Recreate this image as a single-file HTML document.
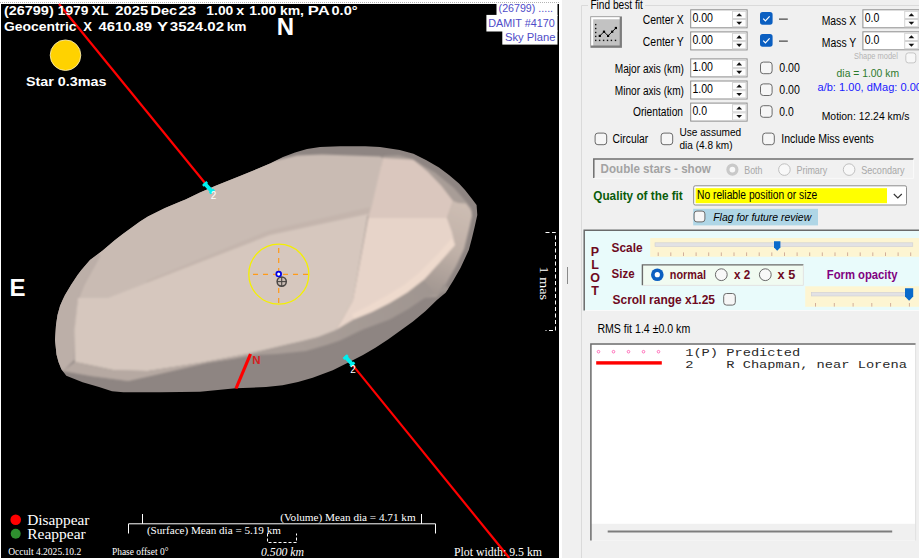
<!DOCTYPE html>
<html>
<head>
<meta charset="utf-8">
<title>Occult asteroid fit</title>
<style>
html,body{margin:0;padding:0;}
body{width:919px;height:558px;overflow:hidden;background:#f0f0f0;position:relative;font-family:"Liberation Sans",sans-serif;font-size:11px;color:#000;}
#plot{position:absolute;left:0;top:0;width:561.5px;height:558px;background:#fff;}
#plot svg{position:absolute;left:0;top:0;}
.sb{font-family:"Liberation Sans",sans-serif;font-weight:bold;fill:#fff;}
.sf{font-family:"Liberation Serif",serif;fill:#fff;}
#right{position:absolute;left:561.5px;top:0;width:358px;height:558px;background:#f0f0f0;overflow:hidden;}
.a{position:absolute;white-space:nowrap;line-height:1;}
</style>
</head>
<body>
<div id="plot">
<svg width="562" height="558" viewBox="0 0 562 558">
<rect x="0" y="0" width="561.5" height="558" fill="#fff"/>
<line x1="0" y1="2.5" x2="559" y2="2.5" stroke="#b4b4b4" stroke-width="1" stroke-dasharray="1,1"/>
<rect x="1" y="4" width="558" height="554" fill="#000"/>
<!-- ASTEROID -->
<g id="ast">
<defs>
<clipPath id="oc"><polygon points="55,340 56,325 57.5,315 60,306 62.6,300 65,295 71,285 77.6,275 81.4,270 90,260 102.7,250.5 115,240 122.8,234 140,221.5 147.9,216.5 165,208 180.5,201.5 185.5,199.5 200,192.5 215.6,185.8 240,176 260,167.8 270,163.5 283,157 295,152.6 307,149 320,147 340,146.3 365.3,146.3 380,147 399.7,149.9 413.5,153.8 426,160 439,167.6 449,175 459,183.4 465,190 470.7,197.2 476.6,205 477.3,215 474.7,226.8 472,238 468.8,250 460.6,267.7 453,281 445.6,292.8 436.9,300 425.6,311 413,321.5 400.5,330.5 388,339.5 375.4,347.7 363,355 350.3,361.5 332.8,370.2 312.7,377.8 298,382 282.6,385.3 266,387 250,387.8 235.6,388.3 200,391.7 160,392.3 123.4,392.3 112,391.2 99,387.1 82.6,382.2 66.3,375.7 61.4,369.2 58.5,362 56.5,354.5"/></clipPath>
<filter id="bl" x="-5%" y="-5%" width="110%" height="110%"><feGaussianBlur stdDeviation="1.1"/></filter>
<linearGradient id="rg" gradientUnits="userSpaceOnUse" x1="465" y1="205" x2="425" y2="300"><stop offset="0" stop-color="#cdbdb3"/><stop offset="0.45" stop-color="#c0b1a8"/><stop offset="1" stop-color="#9b918c"/></linearGradient>
<linearGradient id="mg" gradientUnits="userSpaceOnUse" x1="440" y1="285" x2="300" y2="350"><stop offset="0" stop-color="#9f9590"/><stop offset="1" stop-color="#a99e98"/></linearGradient>
</defs>
<polygon fill="#8e8582" points="55,340 56,325 57.5,315 60,306 62.6,300 65,295 71,285 77.6,275 81.4,270 90,260 102.7,250.5 115,240 122.8,234 140,221.5 147.9,216.5 165,208 180.5,201.5 185.5,199.5 200,192.5 215.6,185.8 240,176 260,167.8 270,163.5 283,157 295,152.6 307,149 320,147 340,146.3 365.3,146.3 380,147 399.7,149.9 413.5,153.8 426,160 439,167.6 449,175 459,183.4 465,190 470.7,197.2 476.6,205 477.3,215 474.7,226.8 472,238 468.8,250 460.6,267.7 453,281 445.6,292.8 436.9,300 425.6,311 413,321.5 400.5,330.5 388,339.5 375.4,347.7 363,355 350.3,361.5 332.8,370.2 312.7,377.8 298,382 282.6,385.3 266,387 250,387.8 235.6,388.3 200,391.7 160,392.3 123.4,392.3 112,391.2 99,387.1 82.6,382.2 66.3,375.7 61.4,369.2 58.5,362 56.5,354.5"/>
<g clip-path="url(#oc)"><g filter="url(#bl)">
<!-- medium inner band along top/right rim -->
<polygon fill="#a89d97" points="383,156 399,155.2 411,158.6 435,172.5 454,188 465.5,201 471,208 471.6,215 469.5,226 464,249 456,266 442,291 437,297 380,300 380,200"/>
<!-- left side facet -->
<polygon fill="#bcafa8" points="50,345 55,310 70,280 95,250 100,256 84,285 78,300 75,330 74.5,360 62,372 54,360"/>
<!-- UL facet -->
<polygon fill="#c9bbb3" points="78,300 84,285 100,256 95,250 122.8,230 147.9,213 185.5,196 240,172 263,163.5 297,155.5 322,154.6 380,156.5 383,158 372,215 270,236 108,300"/>
<!-- shadow stripe -->
<polygon fill="#c4b5ad" points="270,230 370,207 372,215 270,239 150,287 146,281"/>
<!-- LL facet -->
<polygon fill="#d6c7be" points="75,362 74.5,330 78,298 108,298 270,235 368,214 353,300 343,318 335.8,330.2 317.9,337.3 300,341.8 287.6,344.5 250,353.5 200,363 148,371 115.3,370.5"/>
<!-- UR facet -->
<polygon fill="#dac7be" points="383,158 413.5,159.7 428,172 441,185.4 453,201 447,218 368,218 372,205"/>
<!-- right rim gradient -->
<polygon fill="url(#rg)" points="453,201 458,203 466,203.5 471.5,211 472,216 469.6,226.8 464,249 456,266 441.6,290.8 436.9,296 423.6,280 440,262 455,245 452,232 447,218"/>
<!-- LR facet lightest -->
<polygon fill="#e7d4c9" points="368,218 447,218 452,232 455,245 440,262 423.6,280 407.5,292.5 389.6,303.3 371.7,312.3 353.8,319.4 335.8,330.2 343,318 353,300"/>
<polygon fill="#eedacd" points="452,238 455,245 440,262 423.6,280 407.5,292.5 389.6,303.3 371.7,312.3 353.8,319.4 352,314 368,306 386,296 404,285 420,272 436,256"/>
<!-- mid band bottom -->
<polygon fill="url(#mg)" points="63,371 75,362 115.3,370.5 148,371 200,363 250,353.5 287.6,344.5 300,341.8 317.9,337.3 335.8,330.2 353.8,319.4 371.7,312.3 389.6,303.3 407.5,292.5 423.6,280 436.9,296 443.4,283.6 450,290 425.4,297.5 407.5,309.5 389.6,319.5 362.7,329.4 340,340.5 327.5,344.8 306,351 277.3,354 255.8,355 234.4,358.5 207.5,362.8 180.6,369 153.8,375.3 128.3,381 90.8,376"/>
<polygon fill="#b6a9a2" points="63,371 75,362 115.3,370.5 148,371 200,363 250,353.5 250,355.3 234.4,358.5 207.5,362.8 180.6,369 153.8,375.3 128.3,381 90.8,376"/>
</g></g>
</g>
<!-- OVERLAYS -->
<g id="ov">

<!-- chord lines -->
<line x1="59" y1="4" x2="206" y2="184.3" stroke="#f00" stroke-width="2.2"/>
<line x1="352.3" y1="364.6" x2="509.3" y2="558" stroke="#f00" stroke-width="2.2"/>
<path d="M204.2,183 L212.8,192.4" stroke="#00f0f0" stroke-width="3.8" fill="none"/><path d="M204.2,183 l1.7,1.9 M211.1,190.5 l1.7,1.9" stroke="#00f0f0" stroke-width="5.8" fill="none"/>
<path d="M344.8,356.1 L353.2,365.2" stroke="#00f0f0" stroke-width="3.8" fill="none"/><path d="M344.8,356.1 l1.7,1.85 M351.5,363.35 l1.7,1.85" stroke="#00f0f0" stroke-width="5.8" fill="none"/>
<line x1="250.5" y1="354" x2="236" y2="388.5" stroke="#f00" stroke-width="3.2"/>
<text x="252.3" y="364.3" font-size="11.5" font-weight="bold" fill="#d42020" font-family="Liberation Sans, sans-serif">N</text>
<text x="210.8" y="199.3" font-size="10" fill="#fff" font-family="Liberation Sans, sans-serif">2</text>
<text x="350.3" y="372.6" font-size="10" fill="#fff" font-family="Liberation Sans, sans-serif">2</text>
<!-- star circle & cross -->
<circle cx="278.8" cy="274.2" r="30" fill="none" stroke="#f4f000" stroke-width="1.3"/>
<line x1="253" y1="274.3" x2="309" y2="274.3" stroke="#ff9a1a" stroke-width="1.2" stroke-dasharray="5,5"/>
<line x1="278.7" y1="248" x2="278.7" y2="304" stroke="#ff9a1a" stroke-width="1.2" stroke-dasharray="5,5"/>
<circle cx="281.7" cy="281.6" r="4.6" fill="#c9bcb4" stroke="#4a4644" stroke-width="1.5"/>
<line x1="277" y1="281.6" x2="286.4" y2="281.6" stroke="#4a4644" stroke-width="1.1"/>
<line x1="281.7" y1="277" x2="281.7" y2="286.3" stroke="#4a4644" stroke-width="1.1"/>
<circle cx="278.7" cy="274.1" r="2.4" fill="#fff" stroke="#0000e6" stroke-width="1.7"/>
<!-- star disc -->
<circle cx="65.5" cy="55.2" r="15.3" fill="#ffd200" stroke="#fff3c0" stroke-width="0.8"/>
<!-- header texts -->
<text class="sb" font-size="13.3" transform="translate(3.95,14.8) scale(1.086,1)">(26799)</text><text class="sb" font-size="13.3" transform="translate(57.72,14.8) scale(1.039,1)">1979</text><text class="sb" font-size="13.3" transform="translate(91.77,14.8) scale(0.986,1)">XL</text><text class="sb" font-size="13.3" transform="translate(115.29,14.8) scale(1.111,1)">2025</text><text class="sb" font-size="13.3" transform="translate(150.51,14.8) scale(1.092,1)">Dec</text><text class="sb" font-size="13.3" transform="translate(178.41,14.8) scale(1.205,1)">23</text><text class="sb" font-size="13.3" transform="translate(206.34,14.8) scale(1.043,1)">1.00</text><text class="sb" font-size="13.3" transform="translate(236.24,14.8) scale(1.071,1)">x</text><text class="sb" font-size="13.3" transform="translate(249.17,14.8) scale(1.044,1)">1.00</text><text class="sb" font-size="13.3" transform="translate(279.90,14.8) scale(1.052,1)">km,</text><text class="sb" font-size="13.3" transform="translate(307.84,14.8) scale(1.255,1)">PA</text><text class="sb" font-size="13.3" transform="translate(331.51,14.8) scale(1.095,1)">0.0°</text>
<text class="sb" font-size="13.3" transform="translate(3.97,30.8) scale(1.046,1)">Geocentric</text><text class="sb" font-size="13.3" transform="translate(83.21,30.8) scale(0.984,1)">X</text><text class="sb" font-size="13.3" transform="translate(98.57,30.8) scale(1.114,1)">4610.89</text><text class="sb" font-size="13.3" transform="translate(157.09,30.8) scale(1.257,1)">Y</text><text class="sb" font-size="13.3" transform="translate(169.85,30.8) scale(1.128,1)">3524.02</text><text class="sb" font-size="13.3" transform="translate(226.70,30.8) scale(1.030,1)">km</text>
<text class="sb" x="276.8" y="35" font-size="24">N</text>
<text class="sb" x="9.5" y="296" font-size="24">E</text>
<text class="sb" x="26" y="85.5" font-size="13.3" textLength="80.5" lengthAdjust="spacingAndGlyphs">Star 0.3mas</text>
<!-- legend -->
<circle cx="15.7" cy="519.7" r="5.3" fill="#f00"/>
<circle cx="15.7" cy="533.8" r="5" fill="#2f8f2f"/>
<text class="sf" x="27.2" y="524.6" font-size="15" textLength="62.3" lengthAdjust="spacingAndGlyphs">Disappear</text>
<text class="sf" x="27.2" y="538.7" font-size="15" textLength="58.5" lengthAdjust="spacingAndGlyphs">Reappear</text>
<text class="sf" x="8.2" y="554.6" font-size="10" textLength="73" lengthAdjust="spacingAndGlyphs">Occult 4.2025.10.2</text>
<text class="sf" x="112" y="554.6" font-size="10" textLength="56.4" lengthAdjust="spacingAndGlyphs">Phase offset 0°</text>
<!-- brackets -->
<path d="M128.5,533.5 V523.8 H435.5 V533.5" fill="none" stroke="#fff" stroke-width="1"/>
<path d="M142.5,514 V523.8 M421.5,514 V523.8" fill="none" stroke="#fff" stroke-width="1"/>
<text class="sf" x="280.2" y="520.6" font-size="11" textLength="135.5" lengthAdjust="spacingAndGlyphs">(Volume) Mean dia = 4.71 km</text>
<text class="sf" x="146.9" y="534.4" font-size="11" textLength="134" lengthAdjust="spacingAndGlyphs">(Surface) Mean dia = 5.19 km</text>
<path d="M267.5,533.5 V542.5 H296.5 V533.5" fill="none" stroke="#fff" stroke-width="1" stroke-dasharray="3,2"/>
<text class="sf" x="261" y="556" font-size="13" font-style="italic" textLength="43" lengthAdjust="spacingAndGlyphs">0.500 km</text>
<text class="sf" x="454" y="556" font-size="13" textLength="88" lengthAdjust="spacingAndGlyphs">Plot width: 9.5 km</text>
<!-- 1 mas bracket -->
<path d="M545.5,232.5 H555.5 V330.5 H545.5" fill="none" stroke="#fff" stroke-width="1" stroke-dasharray="4,2.5"/>
<text class="sf" transform="translate(540,266.5) rotate(90)" x="0" y="0" font-size="13" textLength="33.5" lengthAdjust="spacingAndGlyphs">1 mas</text>
<!-- info box -->
<rect x="496.5" y="4" width="61" height="12" fill="#fff"/>
<rect x="486.4" y="14.9" width="71.1" height="16.6" fill="#fff"/>
<rect x="502.3" y="30.4" width="55.2" height="14.2" fill="#fff"/>
<g font-family="Liberation Sans, sans-serif" font-size="11" fill="#4e4cc8">
<text x="498.6" y="12" textLength="54.5" lengthAdjust="spacingAndGlyphs">(26799) .....</text>
<text x="488.3" y="26.6" textLength="66.6" lengthAdjust="spacingAndGlyphs">DAMIT #4170</text>
<text x="505" y="40.6" textLength="50.5" lengthAdjust="spacingAndGlyphs">Sky Plane</text>
</g>
</g>
</svg>
</div>
<div id="right"></div>
<!--RP1-->
<svg id="rp" width="919" height="558" viewBox="0 0 919 558" style="position:absolute;left:0;top:0" font-family="Liberation Sans, sans-serif" fill="#000">
<rect x="567" y="267" width="1" height="17" fill="#8a8a8a"/>
<path d="M588,5.5 H581.5 V558" fill="none" stroke="#dadada" stroke-width="1"/>
<path d="M645,5.5 H919" fill="none" stroke="#dadada" stroke-width="1"/>
<text x="590.4" y="8.6" font-size="12" textLength="52.4" lengthAdjust="spacingAndGlyphs">Find best fit</text>
<rect x="590.2" y="16.2" width="31.7" height="31.5" fill="#c2c2c2"/>
<path d="M590.7,47.7 V16.7 H621.9" fill="none" stroke="#a8a8a8" stroke-width="1"/>
<path d="M592.2,46 V18.2 H620" fill="none" stroke="#ffffff" stroke-width="2"/>
<path d="M591,46.6 H620.8 V17" fill="none" stroke="#7c7c7c" stroke-width="2.2"/>
<rect x="595" y="23.9" width="1.4" height="1.4" fill="#111"/>
<rect x="595" y="27.8" width="1.4" height="1.4" fill="#111"/>
<rect x="595" y="31.8" width="1.4" height="1.4" fill="#111"/>
<rect x="595" y="35.7" width="1.4" height="1.4" fill="#111"/>
<rect x="595" y="39.7" width="1.4" height="1.4" fill="#111"/>
<rect x="598.9" y="39.7" width="1.4" height="1.4" fill="#111"/>
<rect x="602.9" y="39.7" width="1.4" height="1.4" fill="#111"/>
<rect x="606.8" y="39.7" width="1.4" height="1.4" fill="#111"/>
<rect x="610.7" y="39.7" width="1.4" height="1.4" fill="#111"/>
<rect x="614.8" y="39.7" width="1.4" height="1.4" fill="#111"/>
<path d="M599.8,35.9 L604,31.7 L608.1,35.9 L612.2,31.7 L615.9,28" fill="none" stroke="#111" stroke-width="1"/>
<rect x="598.7" y="34.8" width="2.2" height="2.2" fill="#000"/>
<rect x="602.9" y="30.6" width="2.2" height="2.2" fill="#000"/>
<rect x="607.0" y="34.8" width="2.2" height="2.2" fill="#000"/>
<rect x="611.1" y="30.6" width="2.2" height="2.2" fill="#000"/>
<rect x="614.8" y="26.9" width="2.2" height="2.2" fill="#000"/>
<text x="642.8" y="23.6" font-size="12" textLength="41" lengthAdjust="spacingAndGlyphs">Center X</text>
<text x="642.8" y="45.6" font-size="12" textLength="41" lengthAdjust="spacingAndGlyphs">Center Y</text>
<text x="614.8" y="73.3" font-size="12" textLength="69.2" lengthAdjust="spacingAndGlyphs">Major axis (km)</text>
<text x="614.8" y="95.1" font-size="12" textLength="69.2" lengthAdjust="spacingAndGlyphs">Minor axis (km)</text>
<text x="633" y="116" font-size="12" textLength="50" lengthAdjust="spacingAndGlyphs">Orientation</text>
<rect x="690.7" y="9.8" width="56.4" height="18" fill="#fff" stroke="#8d8d8d" stroke-width="1"/>
<rect x="732.5" y="11.3" width="13.5" height="7.2" fill="#fdfdfd" stroke="#d4d4d4" stroke-width="1"/>
<rect x="732.5" y="19.5" width="13.5" height="7.2" fill="#fdfdfd" stroke="#d4d4d4" stroke-width="1"/>
<path d="M736.3,16.3 L739.2,13.200000000000001 L742.1,16.3 Z" fill="#111"/>
<path d="M736.3,21.700000000000003 L739.2,24.8 L742.1,21.700000000000003 Z" fill="#111"/>
<text x="692.4" y="22.0" font-size="12" textLength="20.6" lengthAdjust="spacingAndGlyphs">0.00</text>
<rect x="690.7" y="31.9" width="56.4" height="18" fill="#fff" stroke="#8d8d8d" stroke-width="1"/>
<rect x="732.5" y="33.4" width="13.5" height="7.2" fill="#fdfdfd" stroke="#d4d4d4" stroke-width="1"/>
<rect x="732.5" y="41.599999999999994" width="13.5" height="7.2" fill="#fdfdfd" stroke="#d4d4d4" stroke-width="1"/>
<path d="M736.3,38.4 L739.2,35.3 L742.1,38.4 Z" fill="#111"/>
<path d="M736.3,43.8 L739.2,46.9 L742.1,43.8 Z" fill="#111"/>
<text x="692.4" y="44.099999999999994" font-size="12" textLength="20.6" lengthAdjust="spacingAndGlyphs">0.00</text>
<rect x="690.7" y="58.9" width="56.4" height="18" fill="#fff" stroke="#8d8d8d" stroke-width="1"/>
<rect x="732.5" y="60.4" width="13.5" height="7.2" fill="#fdfdfd" stroke="#d4d4d4" stroke-width="1"/>
<rect x="732.5" y="68.6" width="13.5" height="7.2" fill="#fdfdfd" stroke="#d4d4d4" stroke-width="1"/>
<path d="M736.3,65.4 L739.2,62.3 L742.1,65.4 Z" fill="#111"/>
<path d="M736.3,70.8 L739.2,73.9 L742.1,70.8 Z" fill="#111"/>
<text x="692.4" y="71.1" font-size="12" textLength="20.6" lengthAdjust="spacingAndGlyphs">1.00</text>
<rect x="690.7" y="81.0" width="56.4" height="18" fill="#fff" stroke="#8d8d8d" stroke-width="1"/>
<rect x="732.5" y="82.5" width="13.5" height="7.2" fill="#fdfdfd" stroke="#d4d4d4" stroke-width="1"/>
<rect x="732.5" y="90.7" width="13.5" height="7.2" fill="#fdfdfd" stroke="#d4d4d4" stroke-width="1"/>
<path d="M736.3,87.5 L739.2,84.4 L742.1,87.5 Z" fill="#111"/>
<path d="M736.3,92.9 L739.2,96.0 L742.1,92.9 Z" fill="#111"/>
<text x="692.4" y="93.2" font-size="12" textLength="20.6" lengthAdjust="spacingAndGlyphs">1.00</text>
<rect x="690.7" y="103.1" width="56.4" height="18" fill="#fff" stroke="#8d8d8d" stroke-width="1"/>
<rect x="732.5" y="104.6" width="13.5" height="7.2" fill="#fdfdfd" stroke="#d4d4d4" stroke-width="1"/>
<rect x="732.5" y="112.8" width="13.5" height="7.2" fill="#fdfdfd" stroke="#d4d4d4" stroke-width="1"/>
<path d="M736.3,109.6 L739.2,106.5 L742.1,109.6 Z" fill="#111"/>
<path d="M736.3,115.0 L739.2,118.1 L742.1,115.0 Z" fill="#111"/>
<text x="692.4" y="115.3" font-size="12" textLength="14.6" lengthAdjust="spacingAndGlyphs">0.0</text>
<rect x="760" y="12.1" width="12.6" height="12.6" rx="2.6" fill="#0b5fc1"/>
<path d="M763.2,18.7 L765.4,20.9 L769.6,16.3" fill="none" stroke="#fff" stroke-width="1.2"/>
<rect x="760" y="34.1" width="12.6" height="12.6" rx="2.6" fill="#0b5fc1"/>
<path d="M763.2,40.7 L765.4,42.900000000000006 L769.6,38.300000000000004" fill="none" stroke="#fff" stroke-width="1.2"/>
<rect x="760.5" y="62.1" width="11.6" height="11.6" rx="2.8" fill="#f6f6f6" stroke="#6a6a6a" stroke-width="1"/>
<rect x="760.5" y="83.9" width="11.6" height="11.6" rx="2.8" fill="#f6f6f6" stroke="#6a6a6a" stroke-width="1"/>
<rect x="760.5" y="105.7" width="11.6" height="11.6" rx="2.8" fill="#f6f6f6" stroke="#6a6a6a" stroke-width="1"/>
<rect x="779" y="18.6" width="8.8" height="1" fill="#222"/>
<rect x="779" y="40.6" width="8.8" height="1" fill="#222"/>
<text x="779.3" y="72.1" font-size="12" textLength="20.6" lengthAdjust="spacingAndGlyphs">0.00</text>
<text x="779.3" y="94" font-size="12" textLength="20.6" lengthAdjust="spacingAndGlyphs">0.00</text>
<text x="779.3" y="115.8" font-size="12" textLength="14.4" lengthAdjust="spacingAndGlyphs">0.0</text>
<text x="821.7" y="24.6" font-size="12" textLength="34.6" lengthAdjust="spacingAndGlyphs">Mass X</text>
<text x="821.7" y="46.6" font-size="12" textLength="34.6" lengthAdjust="spacingAndGlyphs">Mass Y</text>
<rect x="862.9" y="9.8" width="56.4" height="18" fill="#fff" stroke="#8d8d8d" stroke-width="1"/>
<rect x="904.7" y="11.3" width="13.5" height="7.2" fill="#fdfdfd" stroke="#d4d4d4" stroke-width="1"/>
<rect x="904.7" y="19.5" width="13.5" height="7.2" fill="#fdfdfd" stroke="#d4d4d4" stroke-width="1"/>
<path d="M908.5,16.3 L911.4,13.200000000000001 L914.3,16.3 Z" fill="#111"/>
<path d="M908.5,21.700000000000003 L911.4,24.8 L914.3,21.700000000000003 Z" fill="#111"/>
<text x="864.7" y="22.0" font-size="12" textLength="14.6" lengthAdjust="spacingAndGlyphs">0.0</text>
<rect x="862.9" y="31.8" width="56.4" height="18" fill="#fff" stroke="#8d8d8d" stroke-width="1"/>
<rect x="904.7" y="33.3" width="13.5" height="7.2" fill="#fdfdfd" stroke="#d4d4d4" stroke-width="1"/>
<rect x="904.7" y="41.5" width="13.5" height="7.2" fill="#fdfdfd" stroke="#d4d4d4" stroke-width="1"/>
<path d="M908.5,38.3 L911.4,35.2 L914.3,38.3 Z" fill="#111"/>
<path d="M908.5,43.7 L911.4,46.8 L914.3,43.7 Z" fill="#111"/>
<text x="864.7" y="44.0" font-size="12" textLength="14.6" lengthAdjust="spacingAndGlyphs">0.0</text>
<text x="854" y="59.3" font-size="9" textLength="43.8" lengthAdjust="spacingAndGlyphs" fill="#b4b4b4">Shape model</text>
<rect x="905.8" y="52.9" width="10" height="10" rx="2.6" fill="#f7f7f7" stroke="#c6c6c6" stroke-width="1"/>
<text x="836.6" y="76.6" font-size="11.5" textLength="62.4" lengthAdjust="spacingAndGlyphs" fill="#2c7a2c">dia = 1.00 km</text>
<text x="817.5" y="90.6" font-size="11.5" textLength="104.5" lengthAdjust="spacingAndGlyphs" fill="#1a1aff">a/b: 1.00, dMag: 0.00</text>
<text x="821.7" y="120.1" font-size="11.5" textLength="87.8" lengthAdjust="spacingAndGlyphs">Motion: 12.24 km/s</text>
<rect x="595.1" y="133.1" width="11.6" height="11.6" rx="2.8" fill="#f6f6f6" stroke="#6a6a6a" stroke-width="1"/>
<text x="612.6" y="143.1" font-size="12" textLength="35.6" lengthAdjust="spacingAndGlyphs">Circular</text>
<rect x="661.1" y="133.1" width="11.6" height="11.6" rx="2.8" fill="#f6f6f6" stroke="#6a6a6a" stroke-width="1"/>
<text x="679.5" y="135.5" font-size="11.5" textLength="61.7" lengthAdjust="spacingAndGlyphs">Use assumed</text>
<text x="679.5" y="149" font-size="11.5" textLength="53" lengthAdjust="spacingAndGlyphs">dia (4.8 km)</text>
<rect x="762.7" y="133.1" width="11.6" height="11.6" rx="2.8" fill="#f6f6f6" stroke="#6a6a6a" stroke-width="1"/>
<text x="781.3" y="143.1" font-size="12" textLength="92.6" lengthAdjust="spacingAndGlyphs">Include Miss events</text>
<rect x="593.5" y="159" width="320" height="19" fill="#f1f1f1"/>
<path d="M593.8,178 V159 H913.5" fill="none" stroke="#6e6e6e" stroke-width="1.5"/>
<path d="M594,178.3 H913.6 V159.5" fill="none" stroke="#fafafa" stroke-width="1"/>
<text x="600.6" y="173.1" font-size="12" textLength="110.2" lengthAdjust="spacingAndGlyphs" font-weight="bold" fill="#a3a3a3">Double stars - show</text>
<circle cx="732.4" cy="169.6" r="4.5" fill="#f8f8f8" stroke="#c9c9c9" stroke-width="3.2"/>
<text x="744.3" y="173.7" font-size="11.5" textLength="18.2" lengthAdjust="spacingAndGlyphs" fill="#a8a8a8">Both</text>
<circle cx="784.4" cy="169.6" r="5.8" fill="#f8f8f8" stroke="#c0c0c0" stroke-width="1"/>
<text x="796.5" y="173.7" font-size="11.5" textLength="30.8" lengthAdjust="spacingAndGlyphs" fill="#a8a8a8">Primary</text>
<circle cx="849.1" cy="169.6" r="5.8" fill="#f8f8f8" stroke="#c0c0c0" stroke-width="1"/>
<text x="861.2" y="173.7" font-size="11.5" textLength="43.4" lengthAdjust="spacingAndGlyphs" fill="#a8a8a8">Secondary</text>
<text x="593.3" y="200" font-size="12" textLength="89.5" lengthAdjust="spacingAndGlyphs" font-weight="bold" fill="#0a5c0a">Quality of the fit</text>
<rect x="693.7" y="185.8" width="212.8" height="19.2" rx="1.5" fill="#fff" stroke="#8c8c8c" stroke-width="1"/>
<rect x="695.6" y="188.2" width="191.4" height="15" fill="#ffff00"/>
<text x="697" y="199.2" font-size="12" textLength="120.3" lengthAdjust="spacingAndGlyphs">No reliable position or size</text>
<path d="M893.8,194 L897.8,198 L901.8,194" fill="none" stroke="#333" stroke-width="1.1"/>
<rect x="693.2" y="208.8" width="124.8" height="16.6" fill="#afd6e6"/>
<rect x="694.1" y="211.1" width="10.8" height="10.8" rx="2.8" fill="#f6f6f6" stroke="#6a6a6a" stroke-width="1"/>
<text x="713.2" y="220.5" font-size="11.5" textLength="98" lengthAdjust="spacingAndGlyphs" font-style="italic">Flag for future review</text>
</svg>
<!--/RP1-->
<!--RP2-->
<svg id="rp2" width="919" height="558" viewBox="0 0 919 558" style="position:absolute;left:0;top:0" font-family="Liberation Sans, sans-serif" fill="#000">
<rect x="583.5" y="229.8" width="336" height="81" fill="#e9fbfb"/>
<path d="M584.2,310.5 V230.3 H919" fill="none" stroke="#6a6a6a" stroke-width="1.5"/>
<path d="M585,310.5 H919" fill="none" stroke="#fafafa" stroke-width="1"/>
<text x="595" y="256" font-size="12.5" text-anchor="middle" font-weight="bold" fill="#6e0a1e">P</text>
<text x="595" y="269" font-size="12.5" text-anchor="middle" font-weight="bold" fill="#6e0a1e">L</text>
<text x="595" y="282" font-size="12.5" text-anchor="middle" font-weight="bold" fill="#6e0a1e">O</text>
<text x="595" y="295.2" font-size="12.5" text-anchor="middle" font-weight="bold" fill="#6e0a1e">T</text>
<text x="611.6" y="251.6" font-size="12" textLength="31" lengthAdjust="spacingAndGlyphs" font-weight="bold" fill="#6e0a1e">Scale</text>
<text x="611.6" y="277.6" font-size="12" textLength="23" lengthAdjust="spacingAndGlyphs" font-weight="bold" fill="#6e0a1e">Size</text>
<text x="612.5" y="304" font-size="12" textLength="102.5" lengthAdjust="spacingAndGlyphs" font-weight="bold" fill="#6e0a1e">Scroll range x1.25</text>
<rect x="723.7" y="293.5" width="11.6" height="11.6" rx="2.8" fill="#f6f6f6" stroke="#6a6a6a" stroke-width="1"/>
<rect x="650.2" y="238" width="269" height="18.8" fill="#fdf5d2"/>
<rect x="655" y="242.8" width="257.8" height="3.8" fill="#e2e2e4" stroke="#cfcfd2" stroke-width="0.6"/>
<rect x="657.7" y="252.4" width="1" height="3.6" fill="#d2ae9a"/>
<rect x="670.3" y="252.4" width="1" height="3.6" fill="#d2ae9a"/>
<rect x="683.0" y="252.4" width="1" height="3.6" fill="#d2ae9a"/>
<rect x="695.6" y="252.4" width="1" height="3.6" fill="#d2ae9a"/>
<rect x="708.2" y="252.4" width="1" height="3.6" fill="#d2ae9a"/>
<rect x="720.8" y="252.4" width="1" height="3.6" fill="#d2ae9a"/>
<rect x="733.5" y="252.4" width="1" height="3.6" fill="#d2ae9a"/>
<rect x="746.1" y="252.4" width="1" height="3.6" fill="#d2ae9a"/>
<rect x="758.7" y="252.4" width="1" height="3.6" fill="#d2ae9a"/>
<rect x="771.3" y="252.4" width="1" height="3.6" fill="#d2ae9a"/>
<rect x="784.0" y="252.4" width="1" height="3.6" fill="#d2ae9a"/>
<rect x="796.6" y="252.4" width="1" height="3.6" fill="#d2ae9a"/>
<rect x="809.2" y="252.4" width="1" height="3.6" fill="#d2ae9a"/>
<rect x="821.8" y="252.4" width="1" height="3.6" fill="#d2ae9a"/>
<rect x="834.5" y="252.4" width="1" height="3.6" fill="#d2ae9a"/>
<rect x="847.1" y="252.4" width="1" height="3.6" fill="#d2ae9a"/>
<rect x="859.7" y="252.4" width="1" height="3.6" fill="#d2ae9a"/>
<rect x="872.3" y="252.4" width="1" height="3.6" fill="#d2ae9a"/>
<rect x="885.0" y="252.4" width="1" height="3.6" fill="#d2ae9a"/>
<rect x="897.6" y="252.4" width="1" height="3.6" fill="#d2ae9a"/>
<rect x="910.2" y="252.4" width="1" height="3.6" fill="#d2ae9a"/>
<path d="M774,241.2 H780.4 V247.6 L777.2,250.8 L774,247.6 Z" fill="#0a6acb"/>
<rect x="641.7" y="264.2" width="161.8" height="21.2" fill="#f1fbf1"/>
<path d="M642.4,285.3 V264.9 H803.4" fill="none" stroke="#6a6a6a" stroke-width="1.4"/>
<path d="M643,285.4 H803.4 V265.4" fill="none" stroke="#e4e4e4" stroke-width="1"/>
<circle cx="657.3" cy="274.7" r="6.3" fill="#0b5fc1"/><circle cx="657.3" cy="274.7" r="2.6" fill="#fff"/>
<text x="669.8" y="278.6" font-size="12" textLength="36.2" lengthAdjust="spacingAndGlyphs" font-weight="bold" fill="#6e0a1e">normal</text>
<circle cx="721.3" cy="274.7" r="5.9" fill="#f8f8f8" stroke="#6a6a6a" stroke-width="1"/>
<text x="734" y="278.6" font-size="12" textLength="16.2" lengthAdjust="spacingAndGlyphs" font-weight="bold" fill="#6e0a1e">x 2</text>
<circle cx="765.3" cy="274.7" r="5.9" fill="#f8f8f8" stroke="#6a6a6a" stroke-width="1"/>
<text x="777.6" y="278.6" font-size="12" textLength="17.6" lengthAdjust="spacingAndGlyphs" font-weight="bold" fill="#6e0a1e">x 5</text>
<text x="826.8" y="279" font-size="12" textLength="70.7" lengthAdjust="spacingAndGlyphs" font-weight="bold" fill="#800080">Form opacity</text>
<rect x="805.2" y="286.3" width="114" height="20.5" fill="#fdf5d2"/>
<rect x="811.3" y="292.4" width="101.4" height="3.6" fill="#e2e2e4" stroke="#cfcfd2" stroke-width="0.6"/>
<rect x="815.0" y="303" width="1" height="3.6" fill="#d2ae9a"/>
<rect x="833.8" y="303" width="1" height="3.6" fill="#d2ae9a"/>
<rect x="852.6" y="303" width="1" height="3.6" fill="#d2ae9a"/>
<rect x="871.3" y="303" width="1" height="3.6" fill="#d2ae9a"/>
<rect x="890.1" y="303" width="1" height="3.6" fill="#d2ae9a"/>
<rect x="908.9" y="303" width="1" height="3.6" fill="#d2ae9a"/>
<path d="M905,288.2 H913.2 V296.6 L909.1,300.7 L905,296.6 Z" fill="#0a6acb"/>
<text x="597.4" y="333.2" font-size="12" textLength="92.8" lengthAdjust="spacingAndGlyphs">RMS fit 1.4 ±0.0 km</text>
<rect x="590.3" y="343.2" width="325.4" height="197.4" fill="#fff"/>
<rect x="591" y="523.8" width="324.6" height="16.8" fill="#f0f0f0"/>
<path d="M590.9,540.6 V343.9 H915.6" fill="none" stroke="#6a6a6a" stroke-width="1.5"/>
<path d="M915.6,345 V540.6" fill="none" stroke="#e0e0e0" stroke-width="1"/>
<rect x="607.7" y="530.5" width="284.5" height="2" fill="#7c7c7c"/>
<circle cx="598.5" cy="351.7" r="1.3" fill="none" stroke="#ff64b4" stroke-width="0.9"/>
<circle cx="613.5" cy="351.7" r="1.3" fill="none" stroke="#ff64b4" stroke-width="0.9"/>
<circle cx="628.5" cy="351.7" r="1.3" fill="none" stroke="#ff64b4" stroke-width="0.9"/>
<circle cx="643.5" cy="351.7" r="1.3" fill="none" stroke="#ff64b4" stroke-width="0.9"/>
<circle cx="658.5" cy="351.7" r="1.3" fill="none" stroke="#ff64b4" stroke-width="0.9"/>
<rect x="596.2" y="361.2" width="65.6" height="3.4" fill="#f00"/>
<g font-family="Liberation Mono, monospace" font-size="11.8" fill="#2a2a2a" xml:space="preserve">
<text x="685.2" y="355.6" textLength="115" lengthAdjust="spacingAndGlyphs" style="white-space:pre">1(P) Predicted</text>
<text x="685.2" y="367.6" textLength="221.8" lengthAdjust="spacingAndGlyphs" style="white-space:pre">2    R Chapman, near Lorena</text>
</g>
</svg>
<!--/RP2-->
</body>
</html>
